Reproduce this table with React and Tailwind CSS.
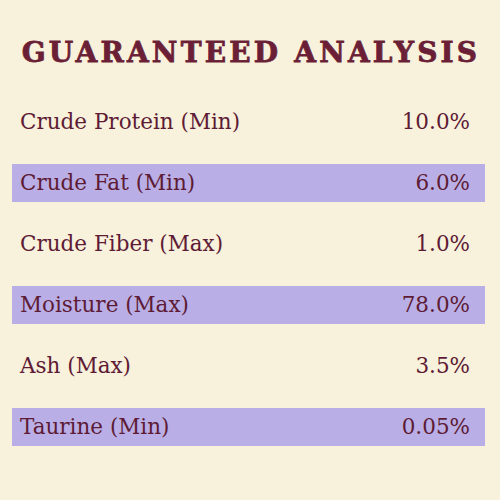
const rows = [
  { label: 'Crude Protein (Min)', value: '10.0%', band: false },
  { label: 'Crude Fat (Min)', value: '6.0%', band: true },
  { label: 'Crude Fiber (Max)', value: '1.0%', band: false },
  { label: 'Moisture (Max)', value: '78.0%', band: true },
  { label: 'Ash (Max)', value: '3.5%', band: false },
  { label: 'Taurine (Min)', value: '0.05%', band: true },
];

export default function App() {
  return (
    <div className="w-[500px] h-[500px] bg-[#f8f1dc] text-[#5e1b35] font-['DejaVu_Serif',serif] overflow-hidden">
      <div className="h-[103px] pt-[33px] flex justify-center">
        <h1 className="text-[28px] leading-[40px] font-bold tracking-[3.2px] pl-[2px] whitespace-nowrap text-[#6a1f36] [-webkit-text-stroke:0.8px_#6a1f36]">GUARANTEED ANALYSIS</h1>
      </div>
      <div className="flex flex-col gap-[23px]">
        {rows.map(row => (
          <div
            key={row.label}
            className={`ml-[12px] w-[473px] h-[38px] pl-[8px] pr-[15px] flex items-center justify-between text-[21.5px] ${row.band ? 'bg-[#b9afe6]' : ''}`}
          >
            <span>{row.label}</span>
            <span>{row.value}</span>
          </div>
        ))}
      </div>
    </div>
  );
}
